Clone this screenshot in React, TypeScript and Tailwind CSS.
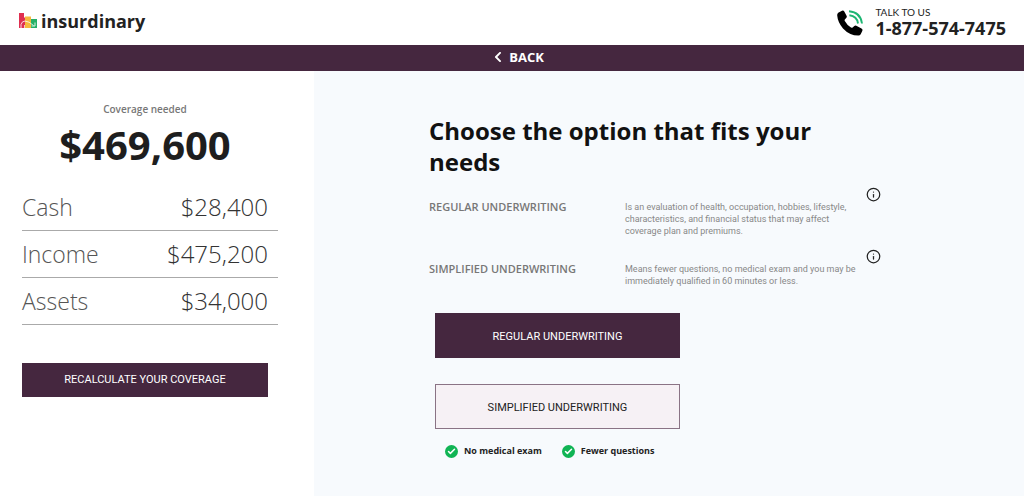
import { FaChevronLeft } from "react-icons/fa";
import { Info, Check } from "lucide-react";

const amounts = [
  { label: "Cash", value: "$28,400" },
  { label: "Income", value: "$475,200" },
  { label: "Assets", value: "$34,000" },
];

const options = [
  {
    name: "REGULAR UNDERWRITING",
    description:
      "Is an evaluation of health, occupation, hobbies, lifestyle, characteristics, and financial status that may affect coverage plan and premiums.",
  },
  {
    name: "SIMPLIFIED UNDERWRITING",
    description:
      "Means fewer questions, no medical exam and you may be immediately qualified in 60 minutes or less.",
  },
];

const perks = ["No medical exam", "Fewer questions"];

function LogoMark() {
  return (
    <svg viewBox="0 0 18 15" className="h-[15px] w-[18px]" aria-hidden="true">
      <path d="M0 0h5v4.500h1V15H0z" fill="#df2f50" />
      <path d="M6 3.500h6V15H6z" fill="#f5b83d" />
      <path d="M12 6h6v9h-6z" fill="#26b068" />
      <path d="M2 15v-3.500Q3 8 6 8q4 .2 8.500 4.500" fill="none" stroke="#fff" strokeWidth=".8" />
      <path d="M12.500 13h3.500V9.500" fill="none" stroke="#fff" strokeWidth=".8" />
      <path d="M5 15v-3h1v3z" fill="#fff" opacity=".7" />
    </svg>
  );
}

function PhoneMark() {
  return (
    <svg viewBox="0 0 26 26" className="h-[26px] w-[26px]" aria-hidden="true">
      <path
        d="M1.200 2.800 5 .7q1.500-.6 2.300.8l2.400 4.500q.5 1.200-.5 2.100L7.800 9.500q-.5.700 0 1.600 2.200 4.100 6.200 6.500.9.400 1.600-.2l1.700-1.500q.9-.8 2-.2l5.200 2.700q1.500.9.900 2.300l-1.700 3.500q-.7 1.400-2.300 1.400Q12.500 25.400 6 18.400 .8 12.500.2 5.500 0 3.800 1.200 2.800z"
        fill="#000"
      />
      <path d="M12 1.200q11.500.8 13 12.300M12.400 5.300q7.600.8 8.600 8.200" fill="none" stroke="#1db673" strokeWidth="1.900" />
    </svg>
  );
}

function Header() {
  return (
    <header className="flex h-[45px] items-center justify-between bg-white pr-[18px] pb-1 pl-[19px]">
      <a href="#home" className="flex items-center gap-1 text-[18px] leading-6 font-bold text-[#222]">
        <LogoMark />
        insurdinary
      </a>
      <a href="tel:18775747475" className="flex items-center gap-3 pt-1 text-[#222]">
        <PhoneMark />
        <span className="flex flex-col pb-1">
          <span className="font-[Lato,sans-serif] text-[10px] leading-[14px]">TALK TO US</span>
          <span className="text-[18px] leading-[18px] font-bold">1-877-574-7475</span>
        </span>
      </a>
    </header>
  );
}

function Summary() {
  return (
    <aside className="bg-white px-[22px] pt-[31px] pb-8 md:w-[314px] md:shrink-0">
      <div className="mr-6 text-center">
        <p className="text-[10px] leading-[14px] font-semibold text-[#777]">Coverage needed</p>
        <p className="text-[40px] leading-[58px] font-bold text-[#1e1e1e]">$469,600</p>
      </div>
      <dl className="mt-[10px] mr-[14px]">
        {amounts.map(({ label, value }) => (
          <div
            key={label}
            className="flex h-[47px] items-center justify-between border-b border-[#aaa] pr-[10px] text-[23px] font-light"
          >
            <dt className="text-[#555]">{label}</dt>
            <dd className="text-[24px] text-[#333]">{value}</dd>
          </div>
        ))}
      </dl>
      <div className="mt-[38px] mr-6">
        <button type="button" className="h-[34px] w-full bg-[#45273f] font-[Roboto,sans-serif] text-[11px] text-white">
          RECALCULATE YOUR COVERAGE
        </button>
      </div>
    </aside>
  );
}

function Options() {
  return (
    <main className="flex-1 bg-[#f7fafd] px-6 pt-11 pb-8">
      <div className="mx-auto max-w-[480px]">
        <h1 className="max-w-[440px] text-[24px] leading-[31px] font-bold text-[#111]">
          Choose the option that fits your needs
        </h1>
        <dl className="mt-[10px]">
          {options.map(({ name, description }) => (
            <div key={name} className="flex min-h-[62px] items-start">
              <dt className="w-[196px] shrink-0 pt-[13px] text-[11px] leading-[14px] font-semibold text-[#777]">
                {name}
              </dt>
              <dd className="flex items-start">
                <p className="w-[241px] pt-[14px] font-[Roboto,sans-serif] text-[9px] leading-3 text-[#888]">
                  {description}
                </p>
                <button type="button" aria-label={`About ${name}`}>
                  <Info size={15} className="text-[#222]" />
                </button>
              </dd>
            </div>
          ))}
        </dl>
        <div className="mt-0.5 ml-[6px] flex max-w-[245px] flex-col gap-[26px] font-[Roboto,sans-serif]">
          <button type="button" className="h-[45px] bg-[#45273f] pt-1 text-[11px] text-white">
            REGULAR UNDERWRITING
          </button>
          <button type="button" className="h-[45px] border border-[#8a7385] bg-[#f6f1f5] pt-1 text-[11px] text-[#222]">
            SIMPLIFIED UNDERWRITING
          </button>
        </div>
        <ul className="mt-[15px] ml-4 flex gap-5">
          {perks.map((perk) => (
            <li key={perk} className="flex items-center gap-[6px] text-[9px] leading-[14px] font-bold text-[#222]">
              <span className="flex size-[13px] items-center justify-center rounded-full bg-[#10b454] text-white">
                <Check size={9} strokeWidth={4} />
              </span>
              {perk}
            </li>
          ))}
        </ul>
      </div>
    </main>
  );
}

export default function App() {
  return (
    <div className="flex min-h-screen flex-col bg-white font-['Open_Sans',sans-serif]">
      <Header />
      <nav className="flex h-[26px] items-center justify-center bg-[#45273f] pb-0.5 pl-3 text-white">
        <a href="#back" className="flex items-center gap-[5px] text-[13px] leading-4 font-bold">
          <FaChevronLeft size={12} />
          BACK
        </a>
      </nav>
      <div className="flex flex-1 flex-col md:flex-row">
        <Summary />
        <Options />
      </div>
    </div>
  );
}
